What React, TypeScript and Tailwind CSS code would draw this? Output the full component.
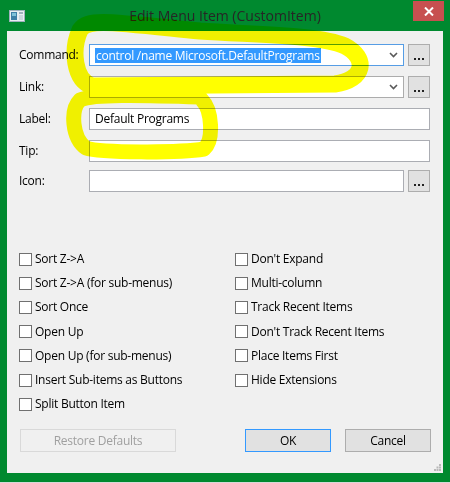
import React from "react";

const font = { fontFamily: '"Open Sans", "Noto Sans", sans-serif' };

function Chevron() {
  return (
    <svg width="9" height="6" viewBox="0 0 9 6" className="shrink-0">
      <path d="M1 1 L4.5 4.5 L8 1" fill="none" stroke="#5a5a5a" strokeWidth="1.6" />
    </svg>
  );
}

function Ellipsis() {
  return (
    <button className="w-[22px] h-[22px] ml-[4px] shrink-0 bg-[#e1e1e1] border border-[#adadad] flex items-end justify-center pb-[5px]">
      <span className="flex gap-[2px]">
        <span className="w-[2px] h-[2px] bg-[#222]" />
        <span className="w-[2px] h-[2px] bg-[#222]" />
        <span className="w-[2px] h-[2px] bg-[#222]" />
      </span>
    </button>
  );
}

function Combo({ focused, children }: { focused?: boolean; children?: React.ReactNode }) {
  return (
    <div
      className={
        "flex-1 h-[22px] bg-white border flex items-center pl-[5px] pr-[5px] " +
        (focused ? "border-[#569de5]" : "border-[#acacac]")
      }
    >
      <div className="flex-1 min-w-0 flex items-center">{children}</div>
      <Chevron />
    </div>
  );
}

function TextBox({ value }: { value?: string }) {
  return (
    <div className="flex-1 h-[22px] bg-white border border-[#abadb3] flex items-center pl-[5px] text-[12px] text-black">
      {value}
    </div>
  );
}

function Row({ label, mt, children }: { label: string; mt: string; children: React.ReactNode }) {
  return (
    <div className={"flex items-center " + mt}>
      <div className="w-[70px] text-[12px] text-black">{label}</div>
      <div className="flex-1 flex items-center">{children}</div>
    </div>
  );
}

function Check({ label }: { label: string }) {
  return (
    <div className="h-[24.2px] flex items-center">
      <span className="w-[13px] h-[13px] border border-[#707070] bg-white shrink-0" />
      <span className="ml-[3px] text-[12px] text-black whitespace-nowrap">{label}</span>
    </div>
  );
}

const left = [
  "Sort Z->A",
  "Sort Z->A (for sub-menus)",
  "Sort Once",
  "Open Up",
  "Open Up (for sub-menus)",
  "Insert Sub-items as Buttons",
  "Split Button Item",
];
const right = [
  "Don't Expand",
  "Multi-column",
  "Track Recent Items",
  "Don't Track Recent Items",
  "Place Items First",
  "Hide Extensions",
];

export default function App() {
  return (
    <div
      className="relative w-[450px] h-[483px] bg-[#00892f] flex flex-col overflow-hidden tracking-[-0.25px]"
      style={font}
    >
      {/* Title bar */}
      <div className="h-[31px] flex items-start shrink-0">
        <div className="w-[37px] pl-[9px] pt-[10px]">
          <svg width="16" height="12" viewBox="0 0 16 12">
            <rect x="0.5" y="0.5" width="15" height="11" fill="#e8eef2" stroke="#9fb1bd" />
            <rect x="2" y="2" width="6" height="8" fill="#3e7fa6" />
            <rect x="3" y="3" width="4" height="3" fill="#7fc1d8" />
            <rect x="10" y="2" width="4" height="2" fill="#9fb1bd" />
            <rect x="10" y="5" width="4" height="5" fill="#c9d6de" />
          </svg>
        </div>
        <div className="flex-1 text-center text-[14px] leading-[31px] tracking-normal text-[#262626]">
          Edit Menu Item (CustomItem)
        </div>
        <div className="w-[37px] pt-[1px]">
          <div className="w-[31px] h-[20px] bg-[#c75050] flex items-center justify-center">
            <svg width="10" height="9" viewBox="0 0 10 9">
              <path d="M1 0.5 L9 8.5 M9 0.5 L1 8.5" stroke="#fff" strokeWidth="2" />
            </svg>
          </div>
        </div>
      </div>

      {/* Client area */}
      <div className="mx-[7px] h-[442px] bg-[#f0f0f0] relative flex flex-col pl-[12px] pr-[13px] pt-[13px] shrink-0">
        <Row label="Command:" mt="">
          <Combo focused>
            <span className="bg-[#3399ff] text-white text-[12px] leading-[15px] px-[1px] whitespace-nowrap">
              control /name Microsoft.DefaultPrograms
            </span>
          </Combo>
          <Ellipsis />
        </Row>
        <Row label="Link:" mt="mt-[10px]">
          <Combo />
          <Ellipsis />
        </Row>
        <Row label="Label:" mt="mt-[10px]">
          <TextBox value="Default Programs" />
        </Row>
        <Row label="Tip:" mt="mt-[10px]">
          <TextBox />
        </Row>
        <Row label="Icon:" mt="mt-[8px]">
          <TextBox />
          <Ellipsis />
        </Row>

        <div className="grid grid-cols-[216px_1fr] mt-[55px]">
          <div className="flex flex-col">
            {left.map((l) => (
              <Check key={l} label={l} />
            ))}
          </div>
          <div className="flex flex-col">
            {right.map((l) => (
              <Check key={l} label={l} />
            ))}
          </div>
        </div>

        <div className="flex items-center mt-[13px] pl-[1px]">
          <button className="w-[156px] h-[23px] border border-[#d9d9d9] bg-[#f0f0f0] text-[12px] text-[#a0a0a0]">
            Restore Defaults
          </button>
          <div className="flex-1" />
          <button className="w-[86px] h-[23px] border border-[#3399ff] bg-[#e1e1e1] text-[12px] text-black">
            OK
          </button>
          <button className="w-[86px] h-[23px] ml-[14px] mr-[-1px] border border-[#adadad] bg-[#e1e1e1] text-[12px] text-black">
            Cancel
          </button>
        </div>

        {/* size grip */}
        <svg width="7" height="7" viewBox="0 0 7 7" className="absolute right-[2px] bottom-[2px]">
          <rect x="5" y="0" width="2" height="2" fill="#b8b8b8" />
          <rect x="2.5" y="2.5" width="2" height="2" fill="#b8b8b8" />
          <rect x="5" y="2.5" width="2" height="2" fill="#b8b8b8" />
          <rect x="0" y="5" width="2" height="2" fill="#b8b8b8" />
          <rect x="2.5" y="5" width="2" height="2" fill="#b8b8b8" />
          <rect x="5" y="5" width="2" height="2" fill="#b8b8b8" />
        </svg>
      </div>
      <div className="flex-1" />
      <div className="h-[1px] bg-[#d8d8d8]" />

      {/* highlighter marks */}
      <svg
        width="450"
        height="483"
        viewBox="0 0 450 483"
        className="absolute inset-0 pointer-events-none mix-blend-multiply"
      >
        <path
          d="M92 86 C74 80 71 50 80 30 C88 18 110 22 200 31 C260 35 320 35 345 46 C368 58 365 80 335 84 L92 86"
          fill="none"
          stroke="#ffff00"
          strokeWidth="17"
          strokeLinecap="round"
          strokeLinejoin="round"
        />
        <path
          d="M200 97 C140 95 92 94 80 100 C70 110 72 138 86 148 C100 153 180 153 204 149 C214 140 212 110 202 100"
          fill="none"
          stroke="#ffff00"
          strokeWidth="15"
          strokeLinecap="round"
          strokeLinejoin="round"
        />
      </svg>
    </div>
  );
}
